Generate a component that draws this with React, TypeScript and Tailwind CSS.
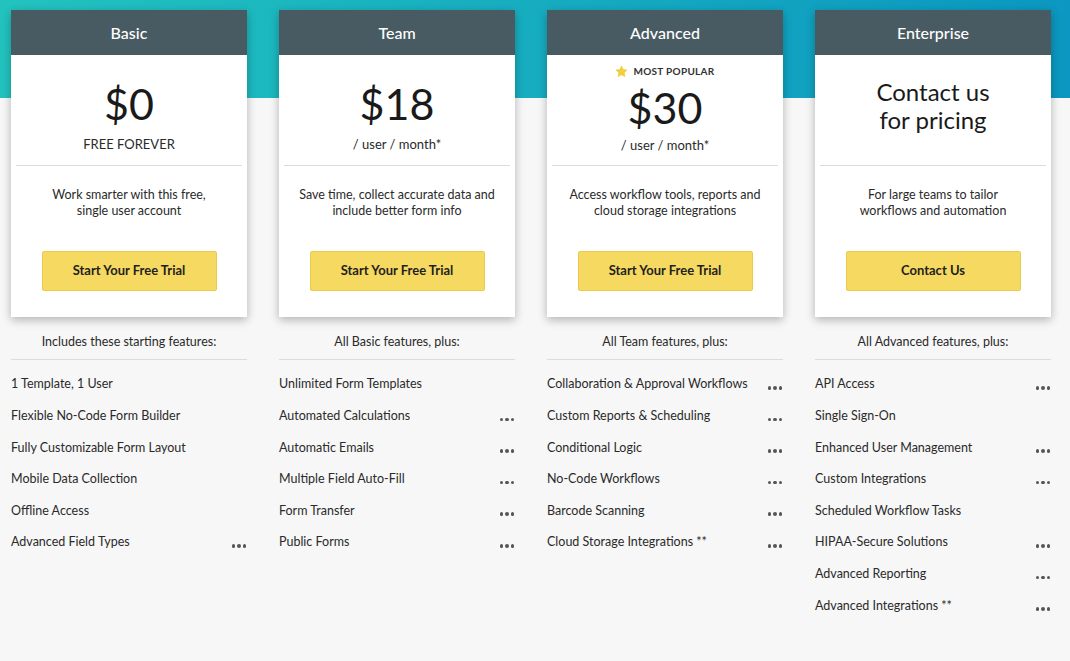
import type { ReactNode } from 'react';

type Feature = { label: string; more: boolean };

type Plan = {
    name: string;
    price: ReactNode;
    description: [string, string];
    cta: string;
    intro: string;
    features: Feature[];
};

const f = (label: string, more = true): Feature => ({ label, more });

function Dots() {
    return (
        <span className="flex items-center gap-[2px] pt-[6px] pr-[1px]">
            <span className="w-[3.5px] h-[3.5px] rounded-full bg-[#555]" />
            <span className="w-[3.5px] h-[3.5px] rounded-full bg-[#555]" />
            <span className="w-[3.5px] h-[3.5px] rounded-full bg-[#555]" />
        </span>
    );
}

function Star() {
    return (
        <svg width="13" height="13" viewBox="0 0 24 24" className="mr-[5px]">
            <path
                d="M12 1.8l3.1 6.6 7.1.9-5.2 4.9 1.3 7.1L12 17.8l-6.3 3.5 1.3-7.1L1.8 9.3l7.1-.9z"
                fill="#f4cf3c"
                stroke="#ecc12a"
                strokeWidth="1"
                strokeLinejoin="round"
            />
        </svg>
    );
}

const plans: Plan[] = [
    {
        name: 'Basic',
        price: (
            <div className="pt-[25px] flex flex-col items-center">
                <div className="text-[43px] leading-[48px] text-[#1a1a1a]">$0</div>
                <div className="mt-[8px] text-[13px] leading-[16px] text-[#2a2a2a]">FREE FOREVER</div>
            </div>
        ),
        description: ['Work smarter with this free,', 'single user account'],
        cta: 'Start Your Free Trial',
        intro: 'Includes these starting features:',
        features: [
            f('1 Template, 1 User', false),
            f('Flexible No-Code Form Builder', false),
            f('Fully Customizable Form Layout', false),
            f('Mobile Data Collection', false),
            f('Offline Access', false),
            f('Advanced Field Types'),
        ],
    },
    {
        name: 'Team',
        price: (
            <div className="pt-[25px] flex flex-col items-center">
                <div className="text-[43px] leading-[48px] text-[#1a1a1a]">$18</div>
                <div className="mt-[8px] text-[13px] leading-[16px] text-[#2a2a2a]">/ user / month*</div>
            </div>
        ),
        description: ['Save time, collect accurate data and', 'include better form info'],
        cta: 'Start Your Free Trial',
        intro: 'All Basic features, plus:',
        features: [
            f('Unlimited Form Templates', false),
            f('Automated Calculations'),
            f('Automatic Emails'),
            f('Multiple Field Auto-Fill'),
            f('Form Transfer'),
            f('Public Forms'),
        ],
    },
    {
        name: 'Advanced',
        price: (
            <div className="pt-[9px] flex flex-col items-center">
                <div className="flex items-center h-[14px] text-[10px] font-bold tracking-[0.3px] text-[#333]">
                    <Star />
                    MOST POPULAR
                </div>
                <div className="mt-[6px] text-[43px] leading-[48px] text-[#1a1a1a]">$30</div>
                <div className="mt-[5px] text-[13px] leading-[16px] text-[#2a2a2a]">/ user / month*</div>
            </div>
        ),
        description: ['Access workflow tools, reports and', 'cloud storage integrations'],
        cta: 'Start Your Free Trial',
        intro: 'All Team features, plus:',
        features: [
            f('Collaboration & Approval Workflows'),
            f('Custom Reports & Scheduling'),
            f('Conditional Logic'),
            f('No-Code Workflows'),
            f('Barcode Scanning'),
            f('Cloud Storage Integrations **'),
        ],
    },
    {
        name: 'Enterprise',
        price: (
            <div className="pt-[23px] flex flex-col items-center text-[24px] leading-[28px] text-[#1a1a1a]">
                <div>Contact us</div>
                <div>for pricing</div>
            </div>
        ),
        description: ['For large teams to tailor', 'workflows and automation'],
        cta: 'Contact Us',
        intro: 'All Advanced features, plus:',
        features: [
            f('API Access'),
            f('Single Sign-On', false),
            f('Enhanced User Management'),
            f('Custom Integrations'),
            f('Scheduled Workflow Tasks', false),
            f('HIPAA-Secure Solutions'),
            f('Advanced Reporting'),
            f('Advanced Integrations **'),
        ],
    },
];

function PlanColumn({ plan }: { plan: Plan }) {
    return (
        <div className="flex flex-col">
            <div className="bg-white shadow-[0_3px_9px_rgba(0,0,0,0.28)]">
                <div className="h-[45px] bg-[#485a62] flex items-center justify-center text-white text-[16px] font-medium">
                    {plan.name}
                </div>
                <div className="h-[110px]">{plan.price}</div>
                <div className="mx-[5px] h-px bg-[#dcdcdc]" />
                <div className="h-[85px] pt-[21px] text-center text-[12.5px] leading-[16px] text-[#2a2a2a]">
                    <div>{plan.description[0]}</div>
                    <div>{plan.description[1]}</div>
                </div>
                <div className="flex justify-center pb-[26px]">
                    <button className="w-[175px] h-[40px] rounded-[2px] bg-[#f6d960] border border-[#ecca4c] text-[13px] font-bold text-[#1f1f1f]">
                        {plan.cta}
                    </button>
                </div>
            </div>
            <div className="mt-[17px] text-center text-[12.5px] leading-[16px] text-[#2a2a2a]">{plan.intro}</div>
            <div className="mt-[9px] h-px bg-[#dcdcdc]" />
            <ul className="mt-[9px]">
                {plan.features.map((feature) => (
                    <li key={feature.label} className="h-[31.6px] flex items-center justify-between text-[12.5px] text-[#2a2a2a]">
                        <span>{feature.label}</span>
                        {feature.more && <Dots />}
                    </li>
                ))}
            </ul>
        </div>
    );
}

export default function App() {
    return (
        <div className="min-h-[661px] bg-[#f7f7f7] bg-[linear-gradient(90deg,#22c3bf,#0b97c1)] bg-no-repeat bg-[length:100%_98px] font-['Lato',sans-serif]">
            <div className="grid grid-cols-[repeat(4,236px)] gap-x-[32px] pl-[11px] pt-[10px] pb-[20px]">
                {plans.map((plan) => (
                    <PlanColumn key={plan.name} plan={plan} />
                ))}
            </div>
        </div>
    );
}
